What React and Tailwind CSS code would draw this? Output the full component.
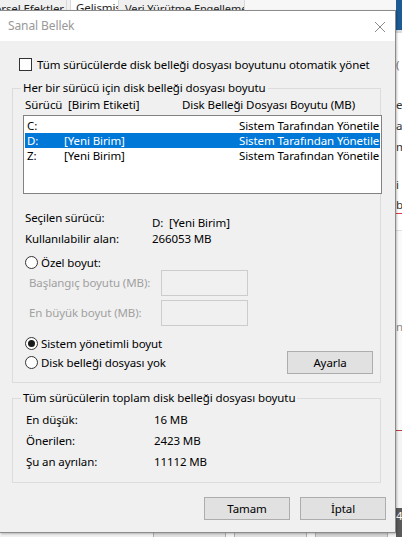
import React from 'react';

const drives = [
  { letter: 'C:', label: '', size: 'Sistem Tarafından Yönetilen' },
  { letter: 'D:', label: '[Yeni Birim]', size: 'Sistem Tarafından Yönetilen', selected: true },
  { letter: 'Z:', label: '[Yeni Birim]', size: 'Sistem Tarafından Yönetilen' },
];

const totals = [
  { label: 'En düşük:', value: '16 MB' },
  { label: 'Önerilen:', value: '2423 MB' },
  { label: 'Şu an ayrılan:', value: '11112 MB' },
];

function Radio({ checked }) {
  return (
    <span className="w-[13px] h-[13px] rounded-full border border-[#333333] bg-white flex items-center justify-center shrink-0">
      {checked && <span className="w-[7px] h-[7px] rounded-full bg-[#1a1a1a]" />}
    </span>
  );
}

function WinButton({ children }) {
  return (
    <button className="w-[86px] h-[23px] bg-[#e1e1e1] border border-[#adadad] text-black flex items-center justify-center shrink-0">
      {children}
    </button>
  );
}

function GroupBox({ title, className, children }) {
  return (
    <div className={`relative ml-[12px] w-[369px] border border-[#dcdcdc] ${className}`}>
      <span className="absolute -top-[9px] left-[8px] px-[2px] bg-[#f0f0f0] leading-[16px] whitespace-nowrap">{title}</span>
      {children}
    </div>
  );
}

export default function App() {
  return (
    <div className="relative w-[402px] h-[537px] overflow-hidden bg-[#f0f0f0] flex font-['Noto_Sans',sans-serif] text-[11.5px] tracking-[-0.1px] text-black">
      {/* parent window behind the dialog */}
      <div className="w-[396px] flex flex-col">
        <div className="h-[10px] flex items-start text-[#222] leading-[16px]">
          <div className="w-[67px] h-[10px] border-r border-[#d9d9d9] overflow-hidden whitespace-nowrap pt-[1px] flex justify-end pr-[2px]">Görsel Efektler</div>
          <div className="ml-[3px] w-[49px] h-[10px] bg-white border-x border-[#d9d9d9] overflow-hidden whitespace-nowrap pl-[5px]">Gelişmiş</div>
          <div className="ml-[2px] w-[124px] h-[10px] border-r border-[#d9d9d9] overflow-hidden whitespace-nowrap pl-[4px] pt-[1px] text-[11px]">Veri Yürütme Engellemesi</div>
          <div className="flex-1 h-[10px] bg-[#f7f7f7]" />
        </div>
        <div className="flex-1" />
        <div className="h-[5px] flex">
          <div className="ml-[153px] w-[73px] bg-[#e1e1e1] border-x border-[#adadad]" />
          <div className="ml-[8px] w-[73px] bg-[#e1e1e1] border-x border-[#adadad]" />
          <div className="ml-[8px] w-[73px] bg-[#d4d4d4] border-x border-[#adadad]" />
        </div>
      </div>
      <div className="w-[6px] flex flex-col bg-white text-[#333] leading-[16px] overflow-hidden whitespace-nowrap">
        <div className="h-[30px] bg-[#1d5b94] shrink-0" />
        <div className="h-[3px] bg-[#dcdcdc] shrink-0" />
        <div className="mt-[24px] text-[#777]">(</div>
        <div className="mt-[24px]">e</div>
        <div className="mt-[5px]">a</div>
        <div className="mt-[5px]">m</div>
        <div className="mt-[22px]">i</div>
        <div className="mt-[4px] border-b border-[#e04040]">b</div>
        <div className="mt-[16px] h-[200px] bg-[#fafafa] border-t border-[#e0e0e0] text-[#888] pt-[88px]">na</div>
        <div className="h-[1px] bg-[#c04040]" />
        <div className="flex-1 bg-[#f4f4f4]" />
        <div className="h-[29px] bg-[#5a5a5a] text-white">4</div>
      </div>

      {/* dialog */}
      <div className="absolute top-[10px] left-0 w-[396px] h-[523px] bg-[#f0f0f0] border-t border-r border-b border-[#8c8c8c] shadow-[1px_1px_2px_rgba(0,0,0,0.25)] flex flex-col">
        <div className="h-[30px] bg-white flex items-center justify-between pl-[8px] pr-[9px] shrink-0">
          <span className="text-[#999999] text-[12px]">Sanal Bellek</span>
          <svg width="12" height="12" viewBox="0 0 12 12" className="mt-[1px]">
            <path d="M1 1 L11 11 M11 1 L1 11" stroke="#8a8a8a" strokeWidth="1" fill="none" />
          </svg>
        </div>

        <label className="mt-[17px] ml-[19px] h-[13px] flex items-center gap-[5px] whitespace-nowrap">
          <span className="w-[13px] h-[13px] border border-[#333333] bg-white shrink-0" />
          <span>Tüm sürücülerde disk belleği dosyası boyutunu otomatik yönet</span>
        </label>

        <GroupBox title="Her bir sürücü için disk belleği dosyası boyutu" className="mt-[17px] h-[295px]">
          <div className="mt-[8px] pl-[12px] h-[15px] flex items-center whitespace-nowrap">
            <span className="w-[157px] shrink-0">Sürücü&nbsp; [Birim Etiketi]</span>
            <span>Disk Belleği Dosyası Boyutu (MB)</span>
          </div>
          <div className="mt-[3px] ml-[10px] w-[359px] h-[79px] bg-white border border-[#828282] pt-[2px] px-[1px] overflow-hidden">
            {drives.map((d) => (
              <div
                key={d.letter}
                className={`h-[15px] leading-[15px] pl-[2px] flex items-center whitespace-nowrap overflow-hidden ${d.selected ? 'bg-[#0078d7] text-white' : ''}`}
              >
                <span className="w-[37px] shrink-0">{d.letter}</span>
                <span className="w-[175px] shrink-0">{d.label}</span>
                <span className="shrink-0">{d.size}</span>
              </div>
            ))}
          </div>

          <div className="mt-[16px] pl-[12px] flex items-start whitespace-nowrap">
            <span className="w-[127px] shrink-0 leading-[15px]">Seçilen sürücü:</span>
            <span className="mt-[5px] leading-[15px]">D:&nbsp; [Yeni Birim]</span>
          </div>
          <div className="mt-[1px] pl-[12px] flex items-center h-[15px] whitespace-nowrap">
            <span className="w-[127px] shrink-0">Kullanılabilir alan:</span>
            <span>266053 MB</span>
          </div>

          <div className="mt-[9px] pl-[12px] h-[15px] flex items-center gap-[3px]">
            <Radio />
            <span>Özel boyut:</span>
          </div>
          <div className="pl-[16px] h-[26px] flex items-center text-[#a0a0a0] whitespace-nowrap">
            <span className="w-[132px] shrink-0">Başlangıç boyutu (MB):</span>
            <span className="w-[87px] h-[26px] border border-[#cccccc] bg-[#f0f0f0] shrink-0" />
          </div>
          <div className="mt-[4px] pl-[16px] h-[26px] flex items-center text-[#a0a0a0] whitespace-nowrap">
            <span className="w-[132px] shrink-0">En büyük boyut (MB):</span>
            <span className="w-[87px] h-[26px] border border-[#cccccc] bg-[#f0f0f0] shrink-0" />
          </div>

          <div className="mt-[10px] pl-[12px] h-[15px] flex items-center gap-[3px]">
            <Radio checked />
            <span>Sistem yönetimli boyut</span>
          </div>
          <div className="pl-[12px] pr-[7px] h-[23px] flex items-center">
            <div className="flex items-center gap-[3px] flex-1">
              <Radio />
              <span>Disk belleği dosyası yok</span>
            </div>
            <WinButton>Ayarla</WinButton>
          </div>
        </GroupBox>

        <GroupBox title="Tüm sürücülerin toplam disk belleği dosyası boyutu" className="mt-[15px] h-[85px]">
          <div className="mt-[10px] pl-[13px] flex flex-col">
            {totals.map((t) => (
              <div key={t.label} className="h-[21px] flex items-center whitespace-nowrap">
                <span className="w-[128px] shrink-0">{t.label}</span>
                <span>{t.value}</span>
              </div>
            ))}
          </div>
        </GroupBox>

        <div className="mt-[14px] pr-[9px] flex justify-end gap-[10px]">
          <WinButton>Tamam</WinButton>
          <WinButton>İptal</WinButton>
        </div>
      </div>
    </div>
  );
}
